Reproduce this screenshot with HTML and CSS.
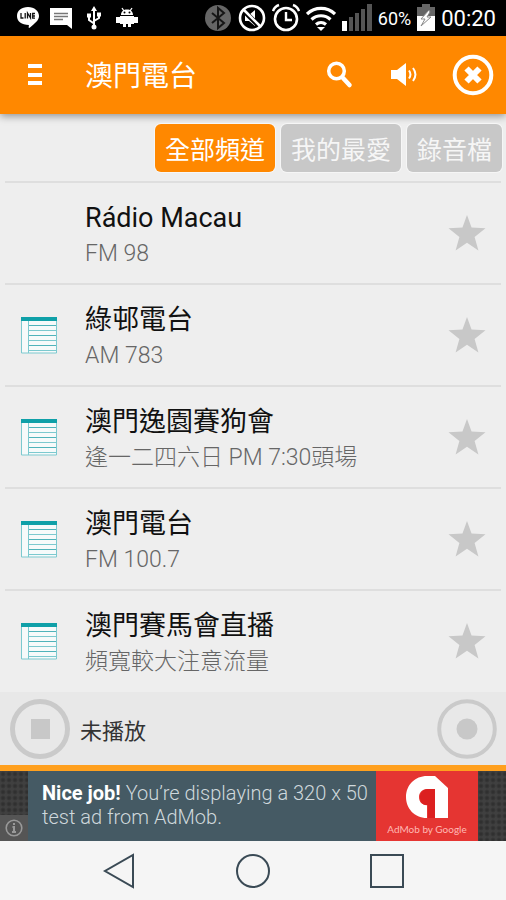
FILE: index.html
```html
<!DOCTYPE html>
<html lang="zh-Hant">
<head>
<meta charset="utf-8">
<meta name="viewport" content="width=device-width, initial-scale=1">
<title>澳門電台</title>
<link rel="stylesheet" href="styles.css">
</head>
<body>
<svg class="defs" aria-hidden="true">
  <symbol id="sheet" viewBox="0 0 38 38">
    <path fill="#f6fafa" d="M1 1h36v36H1z"/>
    <path fill="none" stroke="#7cc9cf" d="M1.500 5v32h35V5M8.500 5v32M9 14.500h27M9 24.500h27M9 34.500h27"/>
    <path fill="none" stroke="#4fb3ba" d="M9 9.500h27M9 19.500h27M9 29.500h27"/>
    <path fill="#0fa0a8" d="M1 1h36v4H1z"/>
  </symbol>
  <symbol id="star" viewBox="0 0 36 36">
    <path fill="#c8c8c8" d="M18 1l4.300 11.900L35.500 13.500 25.200 21.700 28.800 34.500 18 27.200 7.200 34.500 10.800 21.700.5 13.500l13.200-.6z"/>
  </symbol>
</svg>

<div class="status">
  <div class="status-group notices">
    <svg width="24" height="24" viewBox="0 0 24 24"><path fill="#fff" d="M12 1c6.500 0 11 4 11 9 0 4.500-4 7-9 11.500-1 .9-1.500.5-1.300-.6l.2-1.900C5.500 19 1 15.500 1 10S5.500 1 12 1z"/><path fill="none" stroke="#111" stroke-width="1.300" d="M5 7v5h2.500M9.200 7v5.500M11.500 12.500V7l3 5V7M19 7.500h-2.300v4.700H19M17 10h2"/></svg>
    <svg width="24" height="24" viewBox="0 0 24 24"><path fill="#fff" d="M1 2h22v21l-5-4H1z"/><path stroke="#777" stroke-width="1.500" d="M5 7.500h14M5 10.500h14M5 13.500h9"/></svg>
    <svg width="24" height="24" viewBox="0 0 24 24"><path fill="none" stroke="#fff" stroke-width="2" d="M12 4v17M12 17.500l-5-3.500v-4M12 15l5-3V8"/><path fill="#fff" d="M12 0l3 5H9zM5 7.500h4v4H5zM15 6.500h4v4h-4z"/><circle cx="12" cy="21" r="2.500" fill="#fff"/></svg>
    <svg width="24" height="24" viewBox="0 0 24 24"><path stroke="#fff" stroke-width="1.300" d="M7 2l2 3M17 2l-2 3"/><path fill="#fff" d="M6 9c0-3.500 2.500-5.500 6-5.500S18 5.500 18 9zM5 10h14v8H5zM1 11h4v6H1zM19 11h4v6h-4zM8 18h3v3H8zM13 18h3v3h-3z"/><circle cx="9.500" cy="6.500" r="1"/><circle cx="14.500" cy="6.500" r="1"/></svg>
  </div>
  <div class="status-group">
    <svg width="28" height="30" viewBox="0 0 28 30"><circle cx="14" cy="15" r="13" fill="#666"/><path fill="none" stroke="#161616" stroke-width="2" d="M8 10l12 10-6 5V5l6 5L8 20"/></svg>
    <svg width="28" height="30" viewBox="0 0 28 30"><path fill="#fff" d="M7 12h4l6-5v16l-6-5H7z"/><path stroke="#000" stroke-width="5" d="M5 7l17 17"/><circle cx="14" cy="15" r="12" fill="none" stroke="#fff" stroke-width="2.600"/><path stroke="#fff" stroke-width="2.600" d="M6 7l16 16"/></svg>
    <svg width="28" height="30" viewBox="0 0 28 30"><circle cx="14" cy="16" r="11" fill="none" stroke="#fff" stroke-width="2.600"/><path fill="none" stroke="#fff" stroke-width="2.400" d="M14 9v8h6M1 8c1-3 3-5 6-6M27 8c-1-3-3-5-6-6"/></svg>
    <svg width="30" height="30" viewBox="0 0 30 30"><g fill="none" stroke="#fff" stroke-width="3.200"><path d="M1 11c8-7.500 20-7.500 28 0M5.500 16.500c5.500-5 13.500-5 19 0M10 21.500c3-2.500 7-2.500 10 0"/></g><path fill="#fff" d="M11 24h8l-4 4z"/></svg>
    <svg width="30" height="30" viewBox="0 0 30 30"><path fill="#fff" d="M0 18h5v10H0z"/><path fill="#555" d="M7 14h4v14H7zM13 10h4v18h-4zM19 6h4v22h-4zM25 1h5v27h-5z"/></svg>
    <span class="percent">60%</span>
    <svg width="18" height="30" viewBox="0 0 18 30"><path fill="#666" d="M5 1h8v3h5v10H0V4h5z"/><path fill="#fff" d="M0 13h18v15H0z"/><path fill="#fff" stroke="#888" d="M12 7l-8 9h4l-4 7 10-9h-4l3-5z"/></svg>
    <span class="clock">00:20</span>
  </div>
</div>

<header class="appbar">
  <button class="icon-btn menu" aria-label="選單"><svg width="16" height="24" viewBox="0 0 16 24"><path fill="#fff" d="M1 1h14v4H1zM1 10h14v4H1zM1 18h14v4H1z"/></svg></button>
  <h1>澳門電台</h1>
  <div class="actions">
    <button class="icon-btn" aria-label="搜尋"><svg width="28" height="28" viewBox="0 0 28 28"><g fill="none" stroke="#fff"><circle cx="11.500" cy="10" r="7.800" stroke-width="3.500"/><path stroke-width="4.500" stroke-linecap="round" d="M18 17l6.500 7"/></g></svg></button>
    <button class="icon-btn" aria-label="音量"><svg width="28" height="28" viewBox="0 0 28 28"><path fill="#fff" d="M1 9h6l9-7v23l-9-7H1z"/><path fill="none" stroke="#fff" stroke-width="2" d="M19 9.500c1.800 2.500 1.800 5.500 0 8M23 7c3 4 3 9 0 13"/></svg></button>
    <button class="icon-btn" aria-label="關閉"><svg width="42" height="42" viewBox="0 0 42 42"><circle cx="21" cy="21" r="18.300" fill="none" stroke="#fff" stroke-width="4"/><path stroke="#fff" stroke-width="6" d="M14.500 14.500l13 13M27.500 14.500l-13 13"/></svg></button>
  </div>
</header>

<nav class="tabs">
  <button class="tab active">全部頻道</button>
  <button class="tab">我的最愛</button>
  <button class="tab">錄音檔</button>
</nav>

<ul class="stations">
  <li>
    <span class="thumb"></span>
    <div class="info"><h2>Rádio Macau</h2><p>FM 98</p></div>
    <button class="icon-btn" aria-label="收藏"><svg width="38" height="38"><use href="#star"/></svg></button>
  </li>
  <li>
    <svg class="thumb"><use href="#sheet"/></svg>
    <div class="info"><h2>綠邨電台</h2><p>AM 783</p></div>
    <button class="icon-btn" aria-label="收藏"><svg width="38" height="38"><use href="#star"/></svg></button>
  </li>
  <li>
    <svg class="thumb"><use href="#sheet"/></svg>
    <div class="info"><h2>澳門逸園賽狗會</h2><p>逢一二四六日 PM 7:30頭場</p></div>
    <button class="icon-btn" aria-label="收藏"><svg width="38" height="38"><use href="#star"/></svg></button>
  </li>
  <li>
    <svg class="thumb"><use href="#sheet"/></svg>
    <div class="info"><h2>澳門電台</h2><p>FM 100.7</p></div>
    <button class="icon-btn" aria-label="收藏"><svg width="38" height="38"><use href="#star"/></svg></button>
  </li>
  <li>
    <svg class="thumb"><use href="#sheet"/></svg>
    <div class="info"><h2>澳門賽馬會直播</h2><p>頻寬較大注意流量</p></div>
    <button class="icon-btn" aria-label="收藏"><svg width="38" height="38"><use href="#star"/></svg></button>
  </li>
</ul>

<section class="player">
  <button class="icon-btn" aria-label="停止"><svg width="60" height="60" viewBox="0 0 60 60"><circle cx="30" cy="30" r="27.500" fill="none" stroke="#cacaca" stroke-width="5"/><path fill="#c8c8c8" d="M21 20h19v20H21z"/></svg></button>
  <span class="state">未播放</span>
  <button class="icon-btn" aria-label="錄音"><svg width="60" height="60" viewBox="0 0 60 60"><circle cx="30" cy="30" r="27.800" fill="none" stroke="#cacaca" stroke-width="4"/><circle cx="30" cy="30" r="10.500" fill="#c8c8c8"/></svg></button>
</section>

<aside class="ad">
  <div class="mesh">
    <span class="ad-info"><svg width="20" height="20" viewBox="0 0 20 20"><circle cx="10" cy="10" r="7.800" fill="none" stroke="#999" stroke-width="1.600"/><path fill="none" stroke="#999" stroke-width="2" d="M10 5v2M8.500 9H10v5M8 14h4"/></svg></span>
  </div>
  <p class="ad-text"><b>Nice job!</b> <span>You’re displaying a 320 x 50</span><br><span>test ad from AdMob.</span></p>
  <div class="ad-brand">
    <svg width="44" height="44" viewBox="0 0 44 44"><path fill="#fff" d="M22 43C9 43 1 33 1 22 1 10 10 1 22 1h8l13 12v30H30V14h-8c-5 0-8 4-8 8 0 5 3 8 8 8z"/><path fill="#dc2020" d="M23 14h7v29h-7V30c-5 1-8-3-8-8s4-8 8-8z"/></svg>
    <span>AdMob by Google</span>
  </div>
  <div class="mesh"></div>
</aside>

<nav class="sysnav">
  <button class="icon-btn" aria-label="返回"><svg width="36" height="36" viewBox="0 0 36 36"><path fill="none" stroke="#3a4a55" stroke-width="2" d="M32 2v32L4 18z"/></svg></button>
  <button class="icon-btn" aria-label="主畫面"><svg width="36" height="36" viewBox="0 0 36 36"><circle cx="18" cy="18" r="16" fill="none" stroke="#3a4a55" stroke-width="2"/></svg></button>
  <button class="icon-btn" aria-label="最近使用"><svg width="36" height="36" viewBox="0 0 36 36"><path fill="none" stroke="#3a4a55" stroke-width="2" d="M2 2h32v32H2z"/></svg></button>
</nav>
</body>
</html>
```
FILE: styles.css
```css
* {
  box-sizing: border-box;
}

body {
  margin: 0;
  min-height: 100vh;
  display: flex;
  flex-direction: column;
  background: #eee;
  color: #111;
  font-family: Roboto, "Noto Sans CJK TC", sans-serif;
}

h1, h2, p, ul {
  margin: 0;
  padding: 0;
  font-weight: 400;
}

button {
  font: inherit;
  border: 0;
  padding: 0;
  cursor: pointer;
}

svg {
  display: block;
}

.defs {
  position: absolute;
  width: 0;
  height: 0;
}

.icon-btn {
  background: none;
}

/* Status bar */
.status {
  height: 36px;
  padding: 0 10px 0 16px;
  display: flex;
  justify-content: space-between;
  align-items: center;
  background: #000;
  color: #fff;
}

.status-group {
  display: flex;
  align-items: center;
  gap: 6px;
}

.notices {
  gap: 9px;
}

.percent {
  font-size: 18px;
}

.clock {
  font-size: 22px;
}

/* App bar */
.appbar {
  height: 78px;
  padding: 0 12px 0 27px;
  display: flex;
  align-items: center;
  background: #ff8800;
  color: #fff;
  box-shadow: 0 2px 8px rgba(0, 0, 0, 0.4);
}

.menu {
  width: 58px;
}

.appbar h1 {
  flex: 1;
  padding-top: 4px;
  font-size: 28px;
  line-height: 36px;
}

.actions {
  display: flex;
  align-items: center;
  gap: 31px;
}

.actions .icon-btn {
  min-width: 34px;
  display: flex;
  justify-content: center;
}

/* Tabs */
.tabs {
  height: 67px;
  padding: 10px 4px 9px;
  display: flex;
  justify-content: flex-end;
  gap: 6px;
}

.tab {
  padding: 0 10px;
  border-radius: 6px;
  background: #c8c8c8;
  color: #f6f6f6;
  font-size: 25px;
  box-shadow: 0 0 0 1px #f6f6f6;
}

.tab.active {
  background: #ff8800;
  color: #fff;
}

/* Station list */
.stations {
  flex: 1;
  padding: 0 5px;
  list-style: none;
}

.stations li {
  height: 102px;
  padding: 0 15px;
  display: flex;
  align-items: center;
  border-top: 2px solid #dedede;
}

.thumb {
  width: 38px;
  height: 38px;
  margin-right: 27px;
}

.info {
  flex: 1;
  padding-top: 6px;
}

.info h2 {
  font-size: 27px;
  line-height: 36px;
}

.info p {
  color: #666;
  font-size: 23px;
  font-weight: 300;
  line-height: 36px;
}

/* Player */
.player {
  height: 73px;
  padding: 0 9px 0 10px;
  display: flex;
  align-items: center;
  gap: 10px;
  background: #e8e8e8;
}

.state {
  flex: 1;
  color: #333;
  font-size: 22px;
}

/* Ad banner */
.ad {
  display: flex;
  height: 76px;
  border-top: 6px solid #ffa01e;
  background: #455a64;
}

.mesh {
  width: 28px;
  display: flex;
  align-items: flex-end;
  background: #404040 radial-gradient(circle, #303030 1px, #404040 3px) 0 0 / 6px 6px;
}

.ad-info {
  width: 100%;
  padding: 3px 4px;
  background: #555;
}

.ad-text {
  flex: 1;
  padding: 10px 0 0 14px;
  color: #cfd8dc;
  font-size: 20px;
  font-weight: 300;
  line-height: 24px;
}

.ad-text b {
  color: #fff;
  font-weight: 700;
}

.ad-brand {
  width: 102px;
  padding-top: 4px;
  display: flex;
  flex-direction: column;
  align-items: center;
  background: #e53532;
  color: #ffb9b5;
  font-family: Lato, sans-serif;
  font-size: 10px;
  line-height: 20px;
}

/* System navigation */
.sysnav {
  height: 59px;
  display: flex;
  justify-content: center;
  align-items: center;
  gap: 98px;
  background: #f5f5f5;
}
```
